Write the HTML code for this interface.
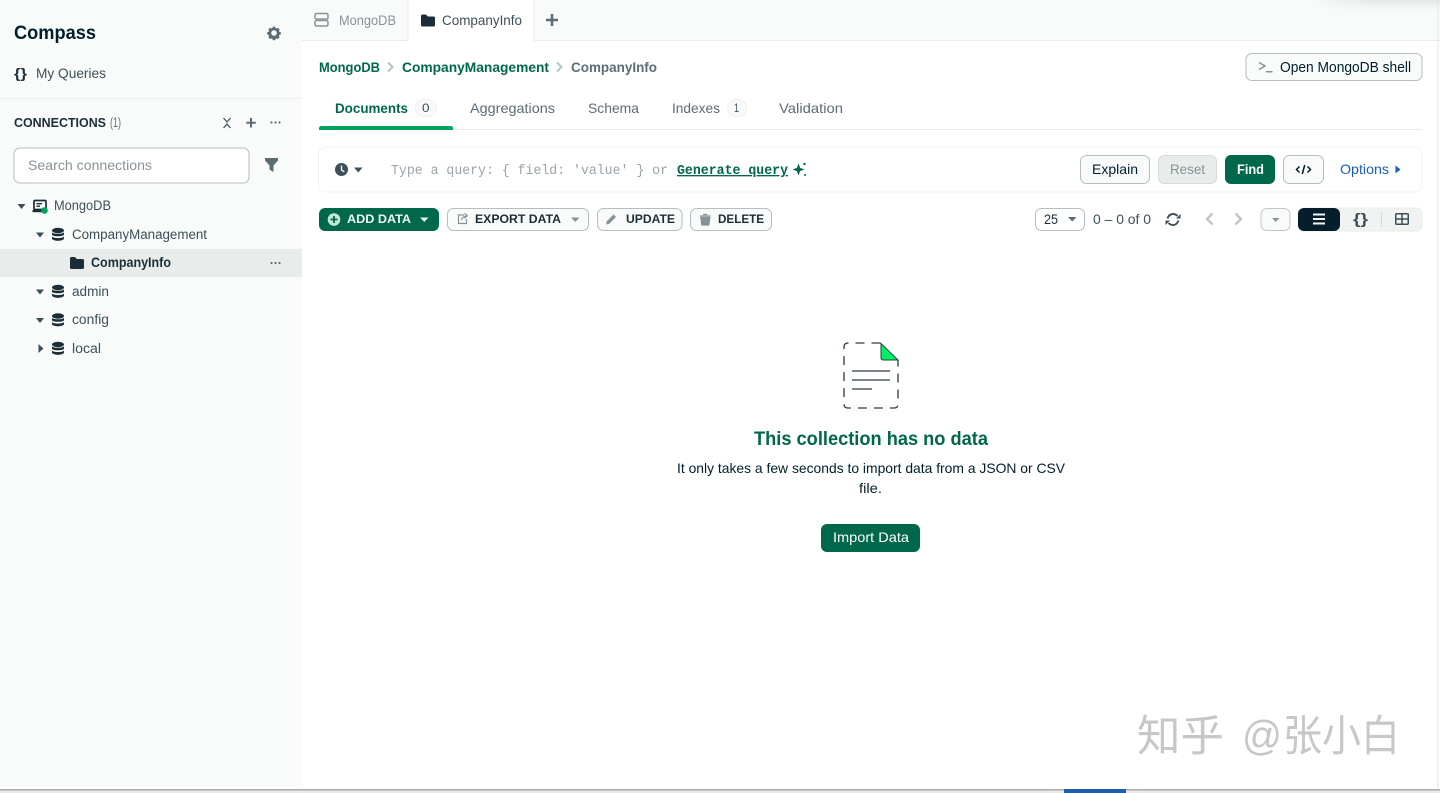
<!DOCTYPE html>
<html lang="en">
<head>
<meta charset="utf-8">
<title>Compass</title>
<style>
html,body{margin:0;padding:0;width:1440px;height:793px;overflow:hidden;background:#fff}
svg{display:block}
text{font-family:"Liberation Sans","Noto Sans CJK SC",sans-serif;font-size:13.5px;fill:#3d4f58}
.b{font-weight:bold}
.m{font-family:"Liberation Mono",monospace}
</style>
</head>
<body>
<svg width="1440" height="793" viewBox="0 0 1440 793" xmlns="http://www.w3.org/2000/svg">
<defs>
<linearGradient id="sh" x1="0" y1="0" x2="0" y2="1"><stop offset="0" stop-color="#e2e4e3" stop-opacity=".9"/><stop offset="1" stop-color="#f9fbfa" stop-opacity="0"/></linearGradient>
<linearGradient id="fade" x1="0" y1="0" x2="1" y2="0"><stop offset="0" stop-color="#f9fbfa"/><stop offset="1" stop-color="#f9fbfa" stop-opacity="0"/></linearGradient>
<g id="db" fill="#1c2d38"><ellipse cx="0" cy="-4" rx="6" ry="2.700"/><path d="M-6-2.300C-4.500-.2 4.500-.2 6-2.300V.2C4.500 2.300-4.500 2.300-6 .2zM-6 2C-4.500 4.100 4.500 4.100 6 2V4.300C4.500 7-4.500 7-6 4.300z"/></g>
<path id="folder" d="M0 1.500Q0 0 1.500 0H5L6.800 2H12.500Q14 2 14 3.500V10.500Q14 12 12.500 12H1.500Q0 12 0 10.500Z" fill="#1c2d38"/>
</defs>

<!-- base -->
<rect width="1440" height="793" fill="#fff"/>
<rect x="0" y="0" width="302" height="787" fill="#f9fbfa"/>
<rect x="302" y="0" width="1138" height="40" fill="#f9fbfa"/>
<rect x="1310" y="0" width="130" height="16" fill="url(#sh)"/>
<rect x="1310" y="0" width="60" height="16" fill="url(#fade)"/>
<rect x="302" y="40" width="1138" height="1" fill="#e8edeb"/>
<rect x="408" y="0" width="126" height="41" fill="#fff"/>
<rect x="407.500" y="0" width="1" height="40" fill="#e8edeb"/>
<rect x="533.500" y="0" width="1" height="40" fill="#e8edeb"/>
<rect x="1437.500" y="0" width="1" height="788" fill="#e4e6e5"/>
<rect x="0" y="789" width="1440" height="1.500" fill="#a9abaa"/>
<rect x="0" y="790.500" width="1440" height="2.500" fill="#e9e9e9"/>
<rect x="1064" y="789" width="62" height="4" fill="#1c5fb0"/>

<!-- sidebar header -->
<text x="14" y="39" class="b" style="font-size:19px;fill:#001e2b" textLength="82" lengthAdjust="spacingAndGlyphs">Compass</text>
<g transform="translate(274,33) scale(.8) translate(-274,-33)"><path fill="#5c6c75" fill-rule="evenodd" d="M272.600 25h2.800l.5 1.700 1.500.6 1.600-.8 2 2-.8 1.600.6 1.500 1.700.5v2.800l-1.700.5-.6 1.500.8 1.600-2 2-1.600-.8-1.500.6-.5 1.700h-2.800l-.5-1.700-1.500-.6-1.600.8-2-2 .8-1.600-.6-1.500-1.700-.5v-2.800l1.700-.5.6-1.500-.8-1.600 2-2 1.600.8 1.500-.6zM274 29.500a3 3 0 1 0 0 7 3 3 0 0 0 0-7z"/></g>
<text x="14" y="78" class="b" style="font-size:14px;fill:#1c2d38" textLength="13" lengthAdjust="spacingAndGlyphs">{}</text>
<text x="36" y="78" style="font-size:14px" textLength="70" lengthAdjust="spacingAndGlyphs">My Queries</text>
<rect x="0" y="98" width="302" height="1" fill="#eceff0"/>
<text x="14" y="127" class="b" style="font-size:12.500px;fill:#1c2d38" textLength="92" lengthAdjust="spacingAndGlyphs">CONNECTIONS</text>
<text x="110" y="127" style="font-size:13.500px;fill:#5c6c75" textLength="11" lengthAdjust="spacingAndGlyphs">(1)</text>
<path d="M223.500 118l3.500 4 3.500-4M223.500 128l3.500-4 3.500 4" fill="none" stroke="#3d4f58" stroke-width="1.200"/>
<path d="M251 118v9.500M246.300 122.700h9.500" stroke="#5c6c75" stroke-width="2"/>
<g fill="#5c6c75"><circle cx="271.500" cy="122.500" r="1.100"/><circle cx="275.500" cy="122.500" r="1.100"/><circle cx="279.500" cy="122.500" r="1.100"/></g>
<rect x="14" y="148" width="235" height="35" rx="6" fill="#fff" stroke="#b4bdbf"/>
<text x="28" y="170" style="font-size:14px;fill:#889397" textLength="124" lengthAdjust="spacingAndGlyphs">Search connections</text>
<path d="M265 158h13v2.500l-4.500 5v6.500l-4-2.500v-4l-4.500-5z" fill="#5c6c75"/>

<!-- tree -->
<path d="M17.500 204h8l-4 5z" fill="#3d4f58"/>
<rect x="34" y="200.500" width="12" height="9" rx="1" fill="#fff" stroke="#1c2d38" stroke-width="1.700"/>
<rect x="36.500" y="203" width="5.500" height="1.400" fill="#1c2d38"/><rect x="36.500" y="205.500" width="3.500" height="1.400" fill="#1c2d38"/>
<rect x="32.500" y="210" width="13" height="2.200" fill="#1c2d38"/>
<circle cx="44.500" cy="210.500" r="3.300" fill="#00a35c"/>
<text x="54" y="210" textLength="57" lengthAdjust="spacingAndGlyphs">MongoDB</text>

<path d="M36 232.500h8l-4 5z" fill="#3d4f58"/>
<use href="#db" x="58" y="234.500"/>
<text x="72" y="239" textLength="135" lengthAdjust="spacingAndGlyphs">CompanyManagement</text>

<rect x="0" y="249" width="302" height="28" fill="#e8edeb"/>
<use href="#folder" x="70" y="257"/>
<text x="91" y="267" class="b" style="fill:#1c2d38" textLength="80" lengthAdjust="spacingAndGlyphs">CompanyInfo</text>
<g fill="#5c6c75"><circle cx="271.500" cy="263" r="1.100"/><circle cx="275.500" cy="263" r="1.100"/><circle cx="279.500" cy="263" r="1.100"/></g>

<path d="M36 289.500h8l-4 5z" fill="#3d4f58"/>
<use href="#db" x="58" y="291.500"/>
<text x="72" y="296" textLength="37" lengthAdjust="spacingAndGlyphs">admin</text>

<path d="M36 318h8l-4 5z" fill="#3d4f58"/>
<use href="#db" x="58" y="320"/>
<text x="72" y="324" textLength="37" lengthAdjust="spacingAndGlyphs">config</text>

<path d="M38.500 344l5 4.500-5 4.500z" fill="#3d4f58"/>
<use href="#db" x="58" y="348.500"/>
<text x="72" y="353" textLength="29" lengthAdjust="spacingAndGlyphs">local</text>

<!-- top tabs -->
<g fill="none" stroke="#889397" stroke-width="1.500"><rect x="315" y="13.500" width="13" height="5.500" rx="1.500"/><rect x="315" y="20.500" width="13" height="5.500" rx="1.500"/></g>
<text x="339" y="25" style="font-size:13.500px;fill:#889397" textLength="57" lengthAdjust="spacingAndGlyphs">MongoDB</text>
<use href="#folder" x="421" y="14.500"/>
<text x="442" y="25" style="font-size:13.500px" textLength="80" lengthAdjust="spacingAndGlyphs">CompanyInfo</text>
<path d="M552 14v12M546 20h12" stroke="#5c6c75" stroke-width="2.600"/>

<!-- breadcrumb -->
<text x="319" y="72" class="b" style="fill:#00684a" textLength="61" lengthAdjust="spacingAndGlyphs">MongoDB</text>
<path d="M388 62.500l4.500 4.500-4.500 4.500" fill="none" stroke="#b8c4c2" stroke-width="2"/>
<text x="402" y="72" class="b" style="fill:#00684a" textLength="147" lengthAdjust="spacingAndGlyphs">CompanyManagement</text>
<path d="M557 62.500l4.500 4.500-4.500 4.500" fill="none" stroke="#b8c4c2" stroke-width="2"/>
<text x="571" y="72" class="b" style="fill:#5c6c75" textLength="86" lengthAdjust="spacingAndGlyphs">CompanyInfo</text>

<rect x="1246" y="53.500" width="176" height="27" rx="6" fill="#f9fbfa" stroke="#b4bdbf"/>
<path d="M1259 62.500l6 3.500-6 3.500" fill="none" stroke="#889397" stroke-width="1.500"/>
<rect x="1266" y="71" width="6.500" height="1.500" fill="#889397"/>
<text x="1280" y="72" style="font-size:14.500px;fill:#001e2b" textLength="131" lengthAdjust="spacingAndGlyphs">Open MongoDB shell</text>

<!-- section tabs -->
<rect x="319" y="129" width="1103" height="1" fill="#e8edeb"/>
<path d="M319 130v-1.500q0-2.500 2.500-2.500h129q2.500 0 2.500 2.500v1.500z" fill="#00a35c"/>
<text x="335" y="113" class="b" style="fill:#00684a" textLength="73" lengthAdjust="spacingAndGlyphs">Documents</text>
<rect x="415.500" y="99.500" width="21" height="17" rx="8.500" fill="#f9fbfa" stroke="#eef1f0"/>
<text x="422" y="112" style="font-size:11.500px;fill:#3d4f58" textLength="7.500" lengthAdjust="spacingAndGlyphs">0</text>
<text x="470" y="113" style="font-size:14px;fill:#5c6c75" textLength="85" lengthAdjust="spacingAndGlyphs">Aggregations</text>
<text x="588" y="113" style="font-size:14px;fill:#5c6c75" textLength="51" lengthAdjust="spacingAndGlyphs">Schema</text>
<text x="672" y="113" style="font-size:14px;fill:#5c6c75" textLength="48" lengthAdjust="spacingAndGlyphs">Indexes</text>
<rect x="727.500" y="99.500" width="19" height="17" rx="8.500" fill="#f9fbfa" stroke="#eef1f0"/>
<text x="734" y="112" style="font-size:11.500px;fill:#3d4f58" textLength="5" lengthAdjust="spacingAndGlyphs">1</text>
<text x="779" y="113" style="font-size:14px;fill:#5c6c75" textLength="64" lengthAdjust="spacingAndGlyphs">Validation</text>

<!-- query bar -->
<rect x="318.500" y="147" width="1103.500" height="45" rx="7" fill="#fff" stroke="#f0f3f2"/>
<circle cx="341.500" cy="169.500" r="6.500" fill="#3d4f58"/>
<path d="M341.500 165.500v4.500l2.800 1.800" fill="none" stroke="#fff" stroke-width="1.300"/>
<path d="M354 167.500h8.500l-4.250 5z" fill="#3d4f58"/>
<text x="391" y="174" class="m" style="font-size:13.500px;fill:#9aa5a9" textLength="277" lengthAdjust="spacingAndGlyphs">Type a query: { field: 'value' } or</text>
<text x="677" y="174" class="m b" style="font-size:13.500px;fill:#00684a;text-decoration:underline" textLength="111" lengthAdjust="spacingAndGlyphs">Generate query</text>
<path d="M798.500 163.500l1.600 4.400 4.400 1.600-4.400 1.600-1.600 4.400-1.600-4.400-4.400-1.600 4.400-1.600z" fill="#00684a"/>
<circle cx="804.500" cy="164" r="1.200" fill="#00684a"/><circle cx="805" cy="175" r="1" fill="#00684a"/>

<rect x="1080.500" y="155.500" width="69" height="28" rx="6" fill="#f9fbfa" stroke="#b4bdbf"/>
<text x="1092" y="174" style="font-size:14px;fill:#001e2b" textLength="46" lengthAdjust="spacingAndGlyphs">Explain</text>
<rect x="1158.500" y="155.500" width="58" height="28" rx="6" fill="#e8edeb" stroke="#d5dad9"/>
<text x="1170" y="174" style="font-size:14px;fill:#889397" textLength="35" lengthAdjust="spacingAndGlyphs">Reset</text>
<rect x="1225" y="155" width="50" height="29" rx="6" fill="#00684a"/>
<text x="1237" y="174" class="b" style="font-size:14px;fill:#fff" textLength="27" lengthAdjust="spacingAndGlyphs">Find</text>
<rect x="1283.500" y="155.500" width="40" height="28" rx="6" fill="#f9fbfa" stroke="#b4bdbf"/>
<path d="M1299.500 166.500l-3 3 3 3M1307.500 166.500l3 3-3 3M1304.700 165l-2.400 9" fill="none" stroke="#001e2b" stroke-width="1.500"/>
<text x="1340" y="174" style="font-size:14px;fill:#1c5fb0" textLength="49" lengthAdjust="spacingAndGlyphs">Options</text>
<path d="M1395.500 165.500l5 4-5 4z" fill="#1c5fb0"/>

<!-- toolbar -->
<rect x="319" y="208" width="120" height="23" rx="6" fill="#00684a"/>
<circle cx="334" cy="219.500" r="6.300" fill="#c3e7d7"/>
<path d="M334 216v7M330.500 219.500h7" stroke="#00684a" stroke-width="1.800"/>
<text x="347" y="223" class="b" style="font-size:12px;fill:#f1f8f5" textLength="64" lengthAdjust="spacingAndGlyphs">ADD DATA</text>
<path d="M420 217.500h8.500l-4.250 4.500z" fill="#e3f4ec"/>

<rect x="447.500" y="208.500" width="141" height="22" rx="6" fill="#f9fbfa" stroke="#b4bdbf"/>
<path d="M464 215h-5.500v8.500h8V219M461.500 220q.5-3.500 5.500-4M464.500 213.500l2.800 2.300-2.800 2.300" fill="none" stroke="#889397" stroke-width="1.200"/>
<text x="475" y="223" class="b" style="font-size:12px;fill:#1c2d38" textLength="86" lengthAdjust="spacingAndGlyphs">EXPORT DATA</text>
<path d="M571 217.500h8.500l-4.250 4.500z" fill="#889397"/>

<rect x="597.500" y="208.500" width="84.500" height="22" rx="6" fill="#f9fbfa" stroke="#b4bdbf"/>
<path d="M606 224.500l.8-3.300 6.700-6.700 2.500 2.500-6.700 6.700z" fill="#889397"/>
<text x="626" y="223" class="b" style="font-size:12px;fill:#1c2d38" textLength="49" lengthAdjust="spacingAndGlyphs">UPDATE</text>

<rect x="690.500" y="208.500" width="81" height="22" rx="6" fill="#f9fbfa" stroke="#b4bdbf"/>
<path d="M700 216h10.500M700.800 217.500h9l-1 7.500h-7zM703 214.500h4.500" fill="#889397" stroke="#889397" stroke-width="1.200"/>
<text x="718" y="223" class="b" style="font-size:12px;fill:#1c2d38" textLength="46" lengthAdjust="spacingAndGlyphs">DELETE</text>

<!-- pagination -->
<rect x="1035.500" y="208.500" width="49" height="22" rx="6" fill="#fff" stroke="#b4bdbf"/>
<text x="1044" y="224" style="font-size:14px;fill:#1c2d38" textLength="14" lengthAdjust="spacingAndGlyphs">25</text>
<path d="M1068 217h8.500l-4.250 4.500z" fill="#5c6c75"/>
<text x="1093" y="224" style="font-size:14px;fill:#3d4f58" textLength="58" lengthAdjust="spacingAndGlyphs">0 – 0 of 0</text>
<path d="M1167.500 218.500q1.500-4.500 5.500-4.500 2.500 0 4.500 2M1178.500 220.500q-1.500 4.500-5.500 4.500-2.500 0-4.500-2" fill="none" stroke="#3d4f58" stroke-width="1.900"/>
<path d="M1176 218.500h4.500v-4.500zM1170 220.500h-4.500v4.500z" fill="#3d4f58"/>
<path d="M1212.500 213.500l-5.500 5.500 5.500 5.500M1235.500 213.500l5.500 5.500-5.500 5.500" fill="none" stroke="#c1c7c6" stroke-width="2.400"/>
<rect x="1261" y="208.500" width="29" height="22" rx="6" fill="#f9fbfa" stroke="#c1c7c6"/>
<path d="M1272 218h7.500l-3.750 4z" fill="#889397"/>

<rect x="1298" y="208" width="124" height="23" rx="6" fill="#f1f3f2" stroke="#e8edeb"/>
<rect x="1298" y="208" width="42" height="23" rx="6" fill="#061e2b"/>
<path d="M1313 214.500h12M1313 219h12M1313 223.500h12" stroke="#f1f4f3" stroke-width="2"/>
<text x="1353" y="224" class="b" style="font-size:14.500px;fill:#3d4f58" textLength="15" lengthAdjust="spacingAndGlyphs">{}</text>
<rect x="1381" y="212" width="1" height="15" fill="#d5dad9"/>
<rect x="1395.750" y="213.750" width="12.500" height="10.500" rx="1" fill="none" stroke="#3d4f58" stroke-width="1.500"/>
<path d="M1395.750 219h12.500M1402 213.750v10.500" stroke="#3d4f58" stroke-width="1.500"/>

<!-- empty state -->
<path d="M880.500 343H848q-4 0-4 4v57q0 4 4 4h46q4 0 4-4v-44" fill="none" stroke="#2b3b44" stroke-width="1.300" stroke-dasharray="9 7"/>
<path d="M881 343.500l17 16.500h-14.500q-2.500 0-2.500-2.500z" fill="#00ed64" stroke="#1c4a3c" stroke-width="1"/>
<path d="M852 371h38M852 380h38M852 389h20" stroke="#2b3b44" stroke-width="1.200"/>

<text x="754" y="445" class="b" style="font-size:19.500px;fill:#00684a" textLength="234" lengthAdjust="spacingAndGlyphs">This collection has no data</text>
<text x="677" y="473" style="font-size:14px;fill:#001e2b" textLength="388" lengthAdjust="spacingAndGlyphs">It only takes a few seconds to import data from a JSON or CSV</text>
<text x="859" y="493" style="font-size:14px;fill:#001e2b" textLength="23" lengthAdjust="spacingAndGlyphs">file.</text>
<rect x="821" y="524" width="99" height="28" rx="6" fill="#00684a"/>
<text x="833" y="542" style="font-size:14px;fill:#fff" textLength="76" lengthAdjust="spacingAndGlyphs">Import Data</text>

<!-- watermark -->
<text x="1137" y="751" style="font-size:43px;fill:#c6c8c8" textLength="87" lengthAdjust="spacingAndGlyphs">知乎</text>
<text x="1242" y="750" style="font-size:42px;fill:#c6c8c8" textLength="40" lengthAdjust="spacingAndGlyphs">@</text>
<text x="1283" y="751" style="font-size:43px;fill:#c6c8c8" textLength="117" lengthAdjust="spacingAndGlyphs">张小白</text>
</svg>
</body>
</html>
